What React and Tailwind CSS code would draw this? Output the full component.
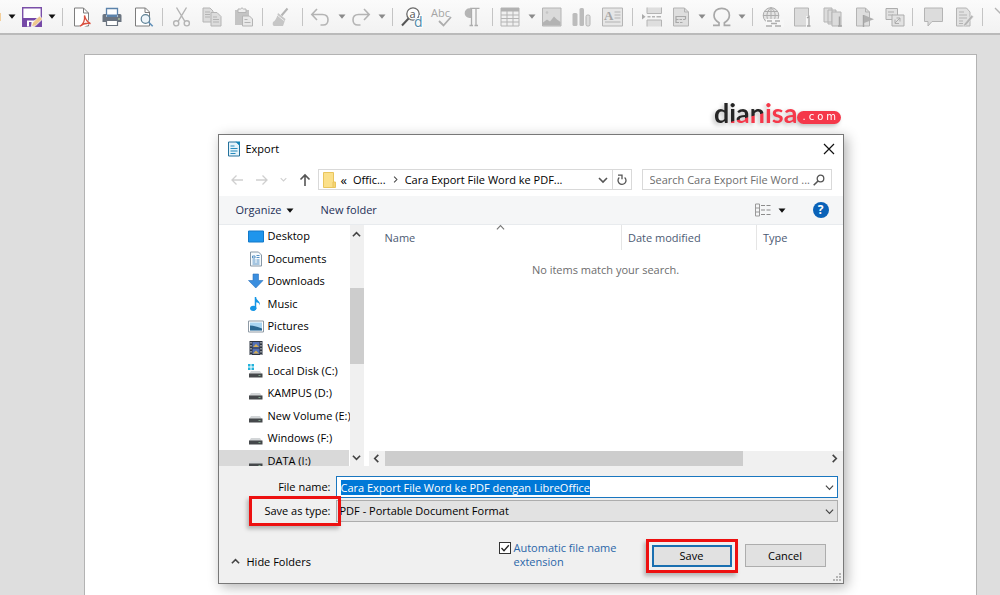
import { useEffect, useRef } from "react";

const G = "#b4b4b4";
const L = "#dcdcdc";

function Icon({ children, size = 20, className = "" }) {
  return (
    <svg viewBox={`0 0 ${size} ${size}`} width={size} height={size} fill="none" className={`shrink-0 overflow-visible ${className}`} aria-hidden="true">
      {children}
    </svg>
  );
}

const toolbar = [
  { t: "caret", dark: true, name: "Open options" },
  {
    name: "Save",
    art: (
      <>
        <path d="M0.7 0.7h18.6v18.6H0.7z" fill="#fff" stroke="#7a4fa8" strokeWidth="1.4" />
        <path d="M0.5 11h19v8.5h-19z" fill="#7548a6" />
        <path d="M5 13.5h8v6H5z" fill="#fff" />
        <path d="M7 15h2.5v4.5H7z" fill="#7548a6" />
        <path d="M9.5 19.8l1-4 7-6.8 3 3-7 6.8z" fill="#efc88d" stroke="#fff" strokeWidth="0.8" />
      </>
    ),
  },
  { t: "caret", dark: true, name: "Save options" },
  { t: "sep" },
  {
    name: "Export as PDF",
    art: (
      <>
        <path d="M2.5 1h9l5 5v13h-14z" fill="#fff" stroke="#7d7d7d" />
        <path d="M11.5 1v5h5" stroke="#7d7d7d" />
        <path d="M12 9v4l-4.5 7H12l7-4" fill="#fff" />
        <path d="M12.5 8.5c1 4.500 3 6.500 6 8-4-.7-7.500 0-10.500 2.700 3.200-2 5-6 4.500-10.700z" stroke="#d9503f" strokeWidth="1.3" />
      </>
    ),
  },
  {
    name: "Print",
    art: (
      <>
        <path d="M4.500 8V1.500h11V8" fill="#fff" stroke="#5c83ab" strokeWidth="1.3" />
        <path d="M0.500 8.500q0-1.500 1.500-1.500h2v3h12V7h2q1.500 0 1.500 1.500V15h-19z" fill="#6b7480" />
        <path d="M4.500 7.500h11v2.500h-11z" fill="#5c83ab" />
        <path d="M4.500 13.500h11v5h-11z" fill="#fff" stroke="#6b7480" strokeWidth="1.200" />
        <path d="M16 12h2" stroke="#cfe3a8" />
      </>
    ),
  },
  {
    name: "Print preview",
    art: (
      <g transform="translate(2 0)">
        <path d="M1.500 1h10l4 4v14h-14z" fill="#fff" stroke="#7d7d7d" />
        <path d="M11 1v4.500h4.500" stroke="#7d7d7d" />
        <circle cx="11.500" cy="12" r="4.300" fill="#eef5fa" stroke="#5f8296" strokeWidth="1.200" />
        <path d="M14.700 15.200l4 4" stroke="#5f8fb8" strokeWidth="1.600" />
      </g>
    ),
  },
  { t: "sep" },
  {
    name: "Cut",
    art: (
      <g stroke={G} strokeWidth="1.400">
        <path d="M4.500 0.500l8.200 13.700M14.500 0.500L6.300 14.200" />
        <circle cx="4.200" cy="16.300" r="2.600" />
        <circle cx="14.800" cy="16.300" r="2.600" />
      </g>
    ),
  },
  {
    name: "Copy",
    art: (
      <g fill={L} stroke={G}>
        <path d="M1 1h7l3 3v11H1z" />
        <path d="M3 5h5M3 7.500h5M3 10h5" />
        <path d="M9 5.500h6l4 4V19H9z" />
        <path d="M11 10h4M11 12.500h6M11 15h6" />
      </g>
    ),
  },
  {
    name: "Paste",
    art: (
      <g transform="translate(2 0)">
        <path d="M1 3h14v15H1z" fill="#c4c4c4" />
        <path d="M4 2h2.500q1.500-2.500 3 0H12v3.500H4z" fill="#eee" stroke={G} />
        <path d="M8.500 9h7l3 3v7h-10z" fill="#e8e8e8" stroke={G} />
        <path d="M10.500 12.500h3M10.500 15.500h6" stroke={G} />
      </g>
    ),
  },
  { t: "sep" },
  {
    name: "Clone formatting",
    art: (
      <>
        <path d="M15.500 1.500l-6 7" stroke={G} strokeWidth="2" />
        <path d="M6 6l7.500 6-2.500 7H2q-2-1-1-4 3-1 5-9z" fill="#c6c6c6" />
        <path d="M5 8l7.500 6" stroke="#eee" />
      </>
    ),
  },
  { t: "sep" },
  {
    name: "Undo",
    art: <path d="M5 2L-0.200 7.500 5 13M0 7.500h10.500q5.500 0 5.500 5.300t-5 5.200H8.500" stroke={G} strokeWidth="1.600" />,
  },
  { t: "caret", name: "Undo options" },
  {
    name: "Redo",
    art: <path d="M12 2l5.200 5.500L12 13M17 7.500H6.500Q1 7.500 1 12.800t5 5.200h2.500" stroke={G} strokeWidth="1.600" />,
  },
  { t: "caret", name: "Redo options" },
  { t: "sep" },
  {
    name: "Find and replace",
    art: (
      <>
        <circle cx="11" cy="7" r="6.200" fill="#fff" stroke="#6a6a6a" strokeWidth="1.300" />
        <path d="M6.500 11.500L0 18.500" stroke="#555" strokeWidth="2" />
        <text x="7.500" y="10.500" fontSize="11" fontFamily="Open Sans, sans-serif" fill="#555">a</text>
        <text x="12" y="19.500" fontSize="14" fontFamily="Open Sans, sans-serif" fill="#5089a8" stroke="#fff" strokeWidth="2" paintOrder="stroke">d</text>
      </>
    ),
  },
  {
    name: "Spelling",
    art: (
      <>
        <text x="-1" y="9.500" fontSize="11" fontFamily="Open Sans, sans-serif" fill="#a5a5a5">Abc</text>
        <path d="M7 14l4.500 4.500L19 10" stroke="#adadad" strokeWidth="1.800" />
      </>
    ),
  },
  {
    name: "Formatting marks",
    art: (
      <>
        <path d="M8 1.300h9.500M9.500 1v18M14 1v18M7.500 18.500H11M12.500 18.500H16" stroke="#adadad" strokeWidth="1.300" />
        <path d="M9 1.300v9.700H7.500a4.850 4.850 0 010-9.700z" fill="#b5b5b5" />
      </>
    ),
  },
  { t: "sep" },
  {
    name: "Insert table",
    art: (
      <g transform="translate(-2 0)">
        <path d="M1 1h18v18H1z" fill="#f0f0f0" stroke={G} />
        <path d="M1 1h18v3.500H1z" fill="#b2b2b2" />
        <path d="M1 8h18M1 11.500h18M1 15h18M7 4v15M13 4v15" stroke={G} />
      </g>
    ),
  },
  { t: "caret", name: "Table options" },
  {
    name: "Insert image",
    art: (
      <>
        <path d="M0.500 1h18.500v18H0.500z" fill="#dadada" stroke={G} />
        <path d="M1 18.500v-3l4-3 3 2 4-5 3 3 3.500 2.500v3.500z" fill="#b3b3b3" />
        <circle cx="5" cy="5.500" r="1.300" fill="#c5c5c5" />
      </>
    ),
  },
  {
    name: "Insert chart",
    art: (
      <g fill="#bcbcbc">
        <rect x="0.500" y="6" width="5" height="13" rx="1.500" />
        <rect x="7.500" y="1" width="4.500" height="18" rx="1.500" />
        <rect x="14" y="8" width="4" height="11" rx="1.500" fill="#ddd" stroke={G} />
      </g>
    ),
  },
  {
    name: "Insert text box",
    art: (
      <>
        <path d="M0.500 1h20v18h-20z" fill="#e6e6e6" stroke={G} />
        <text x="2" y="12.500" fontSize="13" fontFamily="Liberation Serif, serif" fontWeight="bold" fill="#a5a5a5">A</text>
        <path d="M12.500 5h6M12.500 8h6M12.500 11h6M3 15h15.500" stroke={G} />
      </>
    ),
  },
  { t: "sep" },
  {
    name: "Page break",
    art: (
      <>
        <path d="M5 0.500v6h14.500v-6M5 19.500V13h14.500v6.500" fill="#dedede" stroke={G} />
        <path d="M5.500 9.800h3m1.500 0h3m1.500 0h4.500" stroke={G} strokeWidth="1.400" />
        <path d="M0 7l3.500 2.800L0 12.500z" fill="#aaa" />
      </>
    ),
  },
  {
    name: "Insert field",
    art: (
      <>
        <path d="M1.500 1h11l4 4v14h-15z" fill="#dedede" stroke={G} />
        <path d="M12.500 1v4h4" stroke={G} />
        <path d="M4 16V9.500h9.500V12M4 12.500h2.500m1 0H10m1 0h2.500M4.500 15.500H7m1 0h2.500" stroke="#a8a8a8" strokeWidth="1.200" />
      </>
    ),
  },
  { t: "caret", name: "Field options" },
  {
    name: "Special character",
    art: <path d="M1 18.300h6v-2.500C3.500 13.500 2 11 2 8.200 2 4 5.300 1.300 9.700 1.300S17.400 4 17.400 8.200c0 2.800-1.500 5.300-5 7.600v2.500h6" stroke="#a8a8a8" strokeWidth="1.700" />,
  },
  { t: "caret", name: "Character options" },
  { t: "sep" },
  {
    name: "Hyperlink",
    art: (
      <g stroke="#adadad">
        <circle cx="9" cy="8.500" r="7.800" fill="#e4e4e4" />
        <path d="M1 8.500h16M2.500 4.500h13M9 0.500v12M9 0.700c-5 4-5 10-2 14M9 0.700c5 4 4.500 8 3.500 12" />
        <path d="M4 12h18v8H4z" fill="#f7f7f7" stroke="none" />
        <path d="M5 14h5m3 0h5M9 16.500h6M4 19h6m3 0h6" strokeWidth="1.600" />
      </g>
    ),
  },
  {
    name: "Footnote",
    art: (
      <>
        <path d="M2.500 1h14v18h-14z" fill="#dcdcdc" stroke={G} />
        <path d="M14 9h5v11h-5z" fill="#f7f7f7" />
        <path d="M15 11l2-1.500V19M15 19h3.500" stroke="#a5a5a5" strokeWidth="1.300" />
      </>
    ),
  },
  {
    name: "Endnote",
    art: (
      <>
        <path d="M2 1h8v14H2zM6 3h8v14H6z" fill="#dcdcdc" stroke={G} />
        <path d="M10 5h9v14h-9z" fill="#dcdcdc" stroke={G} />
        <path d="M17.500 9.500V19M16 19h4" stroke="#a5a5a5" strokeWidth="1.500" />
      </>
    ),
  },
  {
    name: "Bookmark",
    art: (
      <g transform="translate(3 0)">
        <path d="M1.500 1h9l4 4v14h-13z" fill="#dedede" stroke={G} />
        <path d="M10.500 1v4h4" stroke={G} />
        <path d="M8.500 8v12" stroke="#a5a5a5" strokeWidth="1.400" />
        <path d="M9 8l10 4.200L9 16z" fill="#b0b0b0" />
      </g>
    ),
  },
  {
    name: "Cross-reference",
    art: (
      <g transform="translate(3 0)" fill="#e2e2e2" stroke="#adadad">
        <path d="M1 1.500h11.500v11H1z" />
        <path d="M3 5h6M3 8h5" />
        <path d="M7 8h12v11H7z" />
        <path d="M10 16l5-5M11.500 11H15v3.500M10 12.500v4h4" />
      </g>
    ),
  },
  { t: "sep" },
  {
    name: "Comment",
    art: <path d="M2.500 1h18v13.500H10L6 19v-4.500H2.500z" fill="#dcdcdc" stroke={G} />,
  },
  {
    name: "Track changes",
    art: (
      <g transform="translate(3 0)">
        <path d="M1.500 1h10l3.500 4v14H1.500z" fill="#e2e2e2" stroke={G} />
        <path d="M4 5h5M4 8h8M4 11h8M4 14h4M4 16.500h4" stroke={G} />
        <path d="M9 17l7.500-9 2 1.700L11 18.500l-3 1z" fill="#b5b5b5" stroke="#eee" strokeWidth="0.500" />
      </g>
    ),
  },
  { t: "sep" },
  { name: "Insert line", art: <path d="M3 1l16 16" stroke={G} strokeWidth="1.300" /> },
];

function Chevron({ dir = "down", size = 9, color = "#444", width = 1.5 }) {
  const d = {
    down: "M1 3l4 4 4-4",
    up: "M1 7l4-4 4 4",
    left: "M7 1L3 5l4 4",
    right: "M3 1l4 4-4 4",
  }[dir];
  return (
    <svg viewBox="0 0 10 10" width={size} height={size} fill="none" stroke={color} strokeWidth={width} aria-hidden="true" className="shrink-0">
      <path d={d} />
    </svg>
  );
}

function Caret({ color = "#111" }) {
  return (
    <svg viewBox="0 0 8 5" width="8" height="5" aria-hidden="true" className="shrink-0">
      <path d="M0.500 0.500h7L4 4.700z" fill={color} />
    </svg>
  );
}

const drive = (
  <>
    <path d="M3 8h9l2 3H1z" fill="#d3d6d8" />
    <path d="M1 10.500h13.500v4H1z" fill="#45484b" />
    <path d="M10.500 12.500h2" stroke="#7fa58a" />
  </>
);

const places = [
  { label: "Desktop", art: <path d="M0.500 3h15v11h-15z" fill="#1e95ec" stroke="#1279c9" /> },
  {
    label: "Documents",
    art: (
      <>
        <path d="M2.500 1h8l3 3v11h-11z" fill="#f5fafd" stroke="#8797a5" />
        <path d="M4.500 5h2.500v2H4.500zM8.500 4.500h3M8.500 6.500h3M4.500 9h3m1 0h3M4.500 11h3m1 0h3M4.500 13h7" stroke="#5691c4" />
      </>
    ),
  },
  { label: "Downloads", art: <path d="M5 1h5.500v6.500H15L7.800 15 0.500 7.500H5z" fill="#3b8ede" stroke="#2a72bd" strokeWidth="0.600" /> },
  {
    label: "Music",
    art: (
      <>
        <path d="M7.800 1c.5 3.500 5 4 4 8.500-.3-2-2-3.200-4-3.200z" fill="#1496e6" />
        <path d="M7.500 1v11" stroke="#1496e6" strokeWidth="1.500" />
        <ellipse cx="5.300" cy="12.300" rx="3.200" ry="2.600" fill="#1496e6" />
      </>
    ),
  },
  {
    label: "Pictures",
    art: (
      <>
        <path d="M0.500 3h15v11h-15z" fill="#fff" stroke="#8f9aa5" />
        <path d="M2 4.500h12v8H2z" fill="#a9d4f1" />
        <path d="M2 7.500q5 0 12 3v2H2z" fill="#2b6791" />
      </>
    ),
  },
  {
    label: "Videos",
    art: (
      <>
        <path d="M1.500 1h13v14h-13z" fill="#2d3440" />
        <path d="M4.500 2h7v5.500h-7zM4.500 8.500h7V14h-7z" fill="#5471b5" />
        <path d="M5 7l3-3 3 3zM5 13.500l3-3 3 3z" fill="#d4ae55" />
        <path d="M3 2v13M13 2v13" stroke="#e5e5e5" strokeDasharray="1.500 1.500" />
      </>
    ),
  },
  {
    label: "Local Disk (C:)",
    art: (
      <>
        <path d="M0 1h2.500v2.500H0zM3.500 1H6v2.500H3.500zM0 4.500h2.500V7H0zM3.500 4.500H6V7H3.500z" fill="#22b3dc" />
        {drive}
      </>
    ),
  },
  { label: "KAMPUS (D:)", art: drive },
  { label: "New Volume (E:)", art: drive },
  { label: "Windows (F:)", art: drive },
  { label: "DATA (I:)", art: drive, active: true },
];

function Toolbar() {
  return (
    <header role="toolbar" aria-label="Standard" className="flex h-[35px] shrink-0 items-center overflow-hidden border-b-2 border-[#bababa] bg-gradient-to-b from-[#fbfbfb] to-[#f2f2f2]">
      <span className="mr-[6px] h-2 w-px shrink-0 bg-[#f3cf9b]" />
      {toolbar.map((item, i) => {
        if (item.t === "sep")
          return (
            <span key={i} className="flex w-[10px] shrink-0 justify-center">
              <span className="h-[18px] w-px bg-[#c4c4c4]" />
            </span>
          );
        if (item.t === "caret")
          return (
            <button key={i} aria-label={item.name} className="flex h-8 w-[10px] shrink-0 items-center justify-center">
              <Caret color={item.dark ? "#111" : "#8a8a8a"} />
            </button>
          );
        return (
          <button key={i} aria-label={item.name} className="flex h-8 w-[30px] shrink-0 items-center justify-center">
            <Icon>{item.art}</Icon>
          </button>
        );
      })}
    </header>
  );
}

function Logo() {
  return (
    <div className="flex items-end font-['Lato',sans-serif] drop-shadow-[-2px_2px_2px_rgba(0,0,0,0.25)]">
      <span className="bg-[linear-gradient(165deg,#252525_64%,#f5384a_66%)] bg-clip-text text-[27px] leading-[30px] font-bold text-transparent">dian</span>
      <span className="text-[27px] leading-[30px] font-bold text-[#f5384a]">isa</span>
      <span className="mb-[4px] flex h-[13px] items-center rounded-full bg-[#f5384a] px-[5px] font-['DejaVu_Sans',sans-serif] text-[10px] leading-[12px] text-white">
        <span className="flex gap-[3px] pb-[2px]">
          <span>.</span><span>c</span><span>o</span><span>m</span>
        </span>
      </span>
    </div>
  );
}

function AddressRow() {
  return (
    <div className="flex h-[33px] items-center pr-[11px] pl-[11px]">
      <div className="flex w-[88px] shrink-0 items-center justify-between pr-[5px]">
        <button aria-label="Back">
          <Icon size={14}><path d="M13 7H2M6.500 2.500L2 7l4.500 4.500" stroke="#cfcfcf" strokeWidth="1.300" /></Icon>
        </button>
        <button aria-label="Forward">
          <Icon size={14}><path d="M1 7h11M7.500 2.500L12 7l-4.500 4.500" stroke="#cfcfcf" strokeWidth="1.300" /></Icon>
        </button>
        <button aria-label="Recent locations"><Chevron size={7} color="#cfcfcf" /></button>
        <button aria-label="Up">
          <Icon size={14}><path d="M7 13V2M2.500 6.500L7 2l4.500 4.500" stroke="#555" strokeWidth="1.600" /></Icon>
        </button>
      </div>
      <div className="flex h-[21px] min-w-0 flex-1 border border-[#d9d9d9] bg-white">
        <div className="flex min-w-0 flex-1 items-center pr-[4px] pl-[4px]">
          <svg viewBox="0 0 13 16" width="13" height="16" aria-hidden="true" className="shrink-0">
            <path d="M0.500 0.500h10v15h-10z" fill="#fbe08a" stroke="#e9c55d" />
            <path d="M10 10h2.500v5.500H10z" fill="#f6d575" stroke="#e9c55d" />
          </svg>
          <span className="ml-[5px] text-[13px]">«</span>
          <button className="ml-[6px]">Offic...</button>
          <span className="mx-[6px]"><Chevron dir="right" size={7} /></span>
          <button className="truncate">Cara Export File Word ke PDF...</button>
          <button aria-label="Previous locations" className="ml-auto"><Chevron size={10} width={1.6} color="#555" /></button>
        </div>
        <button aria-label="Refresh" className="flex w-[19px] items-center justify-center border-l border-[#d9d9d9]">
          <Icon size={12}>
            <path d="M3.300 3.500A4 4 0 1 0 8.600 3.400" stroke="#555" strokeWidth="1.300" />
            <path d="M2 1.200h4v4" stroke="#555" strokeWidth="1.300" />
          </Icon>
        </button>
      </div>
      <label className="ml-[10px] flex h-[21px] w-[190px] shrink-0 items-center border border-[#d9d9d9] bg-white pr-[6px] pl-[7px]">
        <input aria-label="Search" placeholder="Search Cara Export File Word ..." className="min-w-0 flex-1 outline-none placeholder:text-[#6d6d6d]" />
        <Icon size={12}>
          <circle cx="7.500" cy="4.500" r="3.300" stroke="#555" strokeWidth="1.300" />
          <path d="M5 7L0.700 11.300" stroke="#555" strokeWidth="1.600" />
        </Icon>
      </label>
    </div>
  );
}

function Sidebar() {
  return (
    <div className="flex w-[145px] shrink-0">
      <nav aria-label="Places" className="min-w-0 flex-1 overflow-hidden">
        <ul className="flex h-[247px] flex-col leading-[10px]">
          {places.map((p) => (
            <li key={p.label} className={p.active ? "mr-px flex-1 bg-[#d9d9d9]" : "flex-1"}>
              <a href="#" className="flex h-full items-center gap-[4px] pl-[29px] whitespace-nowrap">
                <Icon size={16}>{p.art}</Icon>
                {p.label}
              </a>
            </li>
          ))}
        </ul>
      </nav>
      <div className="flex w-[14px] shrink-0 flex-col items-center bg-[#f0f0f0]">
        <button aria-label="Scroll up" className="flex h-[18px] items-center"><Chevron dir="up" width={1.8} /></button>
        <div className="mt-[45px] h-[76px] w-full bg-[#cdcdcd]" />
        <button aria-label="Scroll down" className="mt-auto flex h-[17px] items-center"><Chevron width={1.8} /></button>
      </div>
    </div>
  );
}

function FileList() {
  return (
    <div className="flex min-w-0 flex-1 flex-col pl-[5px]">
      <table className="w-full table-fixed text-left text-[#4c5a73]">
        <thead>
          <tr className="h-[25px]">
            <th className="relative border-r border-[#e5e5e5] pl-[16px] font-normal">
              Name
              <span className="absolute -top-[2px] left-1/2 ml-[1px]"><Chevron dir="up" size={9} color="#777" width={1.3} /></span>
            </th>
            <th className="w-[135px] border-r border-[#e5e5e5] pl-[6px] font-normal">Date modified</th>
            <th className="w-[86px] pl-[6px] font-normal">Type</th>
          </tr>
        </thead>
      </table>
      <p className="mt-[13px] text-center text-[#6d6d6d]">No items match your search.</p>
      <div className="mt-auto flex h-[15px] items-center bg-[#f0f0f0]">
        <button aria-label="Scroll left" className="flex w-[16px] justify-center"><Chevron dir="left" width={1.8} /></button>
        <div className="flex h-full flex-1"><div className="h-full w-[81%] bg-[#cdcdcd]" /></div>
        <button aria-label="Scroll right" className="flex w-[16px] justify-center"><Chevron dir="right" width={1.8} /></button>
      </div>
    </div>
  );
}

function ExportDialog() {
  const nameRef = useRef(null);
  useEffect(() => {
    nameRef.current.focus();
    nameRef.current.select();
  }, []);
  return (
    <section role="dialog" aria-label="Export" className="w-full max-w-[626px] border border-[#787878] bg-white text-[11px] leading-[14px] text-black shadow-[3px_3px_12px_rgba(0,0,0,0.3)]">
      <div className="flex h-[28px] items-center pr-[9px] pl-[7px]">
        <Icon size={16}>
          <path d="M2.500 1h8l3 3v11h-11z" fill="#e5f3fa" stroke="#24719c" />
          <path d="M9.500 0.500H14V5z" fill="#1284b8" />
          <path d="M4.500 5h4M4.500 7.500h7M4.500 10h7M4.500 12.500h5" stroke="#278bbd" />
        </Icon>
        <h1 className="ml-[4px]">Export</h1>
        <button aria-label="Close" className="ml-auto">
          <Icon size={10}><path d="M0 0l10 10M10 0L0 10" stroke="#111" strokeWidth="1.200" /></Icon>
        </button>
      </div>
      <AddressRow />
      <div className="flex h-[29px] items-center border-b border-[#e8ebee] bg-[#f5f6f7] pr-[14px] pl-[17px] text-[#1e3158]">
        <button className="flex items-center gap-[4px]">Organize <Caret /></button>
        <button className="ml-[27px]">New folder</button>
        <button aria-label="Change view" className="ml-auto flex items-center gap-[7px]">
          <Icon size={16}>
            <path d="M0.500 2h4v12h-4zM0.500 6h4M0.500 10h4" stroke="#999" />
            <path d="M6 3.500h4m1.500 0h4M6 8h4m1.500 0h4M6 12.500h4m1.500 0h4" stroke="#8b8b8b" />
          </Icon>
          <Caret />
        </button>
        <button aria-label="Help" className="ml-[27px] flex size-[16px] items-center justify-center rounded-full bg-[#0a62b8] text-[12px] font-bold text-white">?</button>
      </div>
      <div className="flex h-[241px]">
        <Sidebar />
        <FileList />
      </div>
      <form className="bg-[#f0f0f0] pt-[10px] pr-[5px]" onSubmit={(e) => e.preventDefault()}>
        <div className="flex h-[22px] items-center">
          <label htmlFor="file-name" className="w-[117px] shrink-0 pr-[5px] text-right">File name:</label>
          <div className="flex h-full flex-1 items-center border border-[#1a76bf] bg-white pr-[3px] pl-[4px]">
            <input
              id="file-name"
              ref={nameRef}
              defaultValue="Cara Export File Word ke PDF dengan LibreOffice"
              className="h-[15px] min-w-0 flex-1 outline-none selection:bg-[#0078d7] selection:text-white"
            />
            <Chevron width={1.300} />
          </div>
        </div>
        <div className="relative mt-[2px] flex h-[22px] items-center">
          <label htmlFor="file-type" className="w-[117px] shrink-0 pr-[5px] text-right">Save as type:</label>
          <div className="flex h-full min-w-0 flex-1 items-center border border-[#adadad] bg-[#e2e2e2] pr-[3px]">
            <select id="file-type" className="min-w-0 flex-1 appearance-none pl-[3px] outline-none">
              <option>PDF - Portable Document Format</option>
            </select>
            <Chevron width={1.300} />
          </div>
          <span className="pointer-events-none absolute -top-[4px] left-[30px] h-[30px] w-[92px] border-3 border-[#ed1010] shadow-[-2px_3px_4px_rgba(0,0,0,0.25)]" />
        </div>
        <div className="flex h-[61px] items-center pr-[12px] pl-[12px]">
          <button type="button" className="mt-[18px] flex items-center gap-[7px]">
            <Chevron dir="up" width={1.800} /> Hide Folders
          </button>
          <label className="mt-[4px] ml-auto flex w-[146px] gap-[3px] text-[#2a66a8]">
            <span className="relative mt-px size-[12px] shrink-0">
              <input type="checkbox" defaultChecked className="peer block size-[12px] appearance-none border border-[#333] bg-white" />
              <svg viewBox="0 0 12 12" width="12" height="12" fill="none" stroke="#222" strokeWidth="1.300" aria-hidden="true" className="pointer-events-none absolute inset-0 opacity-0 peer-checked:opacity-100">
                <path d="M2.500 6l2.500 2.700 4.800-5.400" />
              </svg>
            </span>
            <span>Automatic file name extension</span>
          </label>
          <div className="mt-[6px] ml-px border-3 border-[#ed1010] p-[3px] shadow-[-2px_3px_4px_rgba(0,0,0,0.25)]">
            <button className="block h-[22px] w-[80px] border-2 border-[#1a6fb0] bg-[#e1e1e1]">Save</button>
          </div>
          <button type="button" className="mt-[6px] ml-[7px] h-[23px] w-[81px] border border-[#adadad] bg-[#e1e1e1]">Cancel</button>
        </div>
        <div className="relative">
          <svg viewBox="0 0 9 9" width="9" height="9" fill="#b5b5b5" aria-hidden="true" className="absolute right-[-4px] bottom-[1px]">
            <path d="M6 0h2v2H6zM3 3h2v2H3zM6 3h2v2H6zM0 6h2v2H0zM3 6h2v2H3zM6 6h2v2H6z" />
          </svg>
        </div>
      </form>
    </section>
  );
}

export default function App() {
  return (
    <div className="flex h-screen min-h-[595px] flex-col overflow-hidden bg-[#dedede] font-['Open_Sans','Noto_Sans',sans-serif]">
      <Toolbar />
      <main className="flex flex-1 flex-col pt-[19px] pr-[23px] pl-[84px]">
        <article className="relative flex-1 border border-b-0 border-[#b3b3b3] bg-white">
          <div className="flex justify-end pt-[43px] pr-[135px]">
            <Logo />
          </div>
          <div className="absolute inset-x-0 top-[79px] flex justify-center">
            <ExportDialog />
          </div>
        </article>
      </main>
    </div>
  );
}
